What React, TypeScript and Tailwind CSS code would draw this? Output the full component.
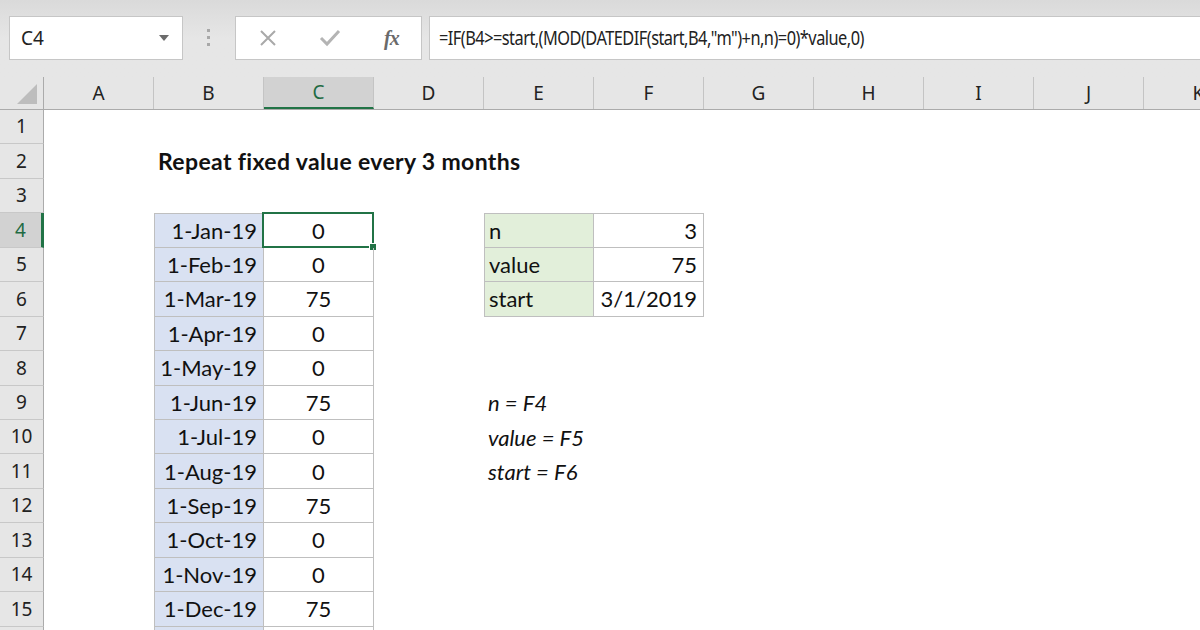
import React from 'react';

const COLS = ['A', 'B', 'C', 'D', 'E', 'F', 'G', 'H', 'I', 'J', 'K'];

type Cell = {
  text: string;
  align: 'left' | 'right' | 'center';
  fill?: string;
  bold?: boolean;
  italic?: boolean;
  boxed?: boolean;
  top?: boolean;
  left?: boolean;
  selected?: boolean;
};

const dates = [
  ['1-Jan-19', '0'],
  ['1-Feb-19', '0'],
  ['1-Mar-19', '75'],
  ['1-Apr-19', '0'],
  ['1-May-19', '0'],
  ['1-Jun-19', '75'],
  ['1-Jul-19', '0'],
  ['1-Aug-19', '0'],
  ['1-Sep-19', '75'],
  ['1-Oct-19', '0'],
  ['1-Nov-19', '0'],
  ['1-Dec-19', '75'],
  ['', ''],
];

const params = [
  ['n', '3'],
  ['value', '75'],
  ['start', '3/1/2019'],
];

const notes: Record<number, string> = { 9: 'n = F4', 10: 'value = F5', 11: 'start = F6' };

function buildRow(r: number): Record<string, Cell> {
  const cells: Record<string, Cell> = {};
  if (r === 2) cells.B = { text: 'Repeat fixed value every 3 months', align: 'left', bold: true };
  const d = dates[r - 4];
  if (d) {
    cells.B = { text: d[0], align: 'right', fill: 'bg-[#d9e1f2]', boxed: true, left: true, top: r === 4 };
    cells.C = { text: d[1], align: 'center', boxed: true, top: r === 4, selected: r === 4 };
  }
  const p = params[r - 4];
  if (p) {
    cells.E = { text: p[0], align: 'left', fill: 'bg-[#e2efda]', boxed: true, left: true, top: r === 4 };
    cells.F = { text: p[1], align: 'right', boxed: true, top: r === 4 };
  }
  if (notes[r]) cells.E = { text: notes[r], align: 'left', italic: true };
  return cells;
}

function GridCell({ cell }: { cell?: Cell }) {
  if (!cell) return <div className="w-[110px] shrink-0 h-full" />;
  const justify =
    cell.align === 'right' ? 'justify-end pr-[6px]' : cell.align === 'center' ? 'justify-center' : 'justify-start pl-[4px]';
  return (
    <div
      className={[
        'relative w-[110px] shrink-0 h-full flex items-center text-[22px] text-[#111] whitespace-nowrap',
        justify,
        cell.fill ?? '',
        cell.boxed ? 'border-r border-b border-[#bfbfbf]' : '',
        cell.boxed && cell.left ? 'border-l' : '',
        cell.boxed && cell.top ? 'border-t' : '',
        cell.bold ? 'font-bold text-[23px] tracking-[0.35px]' : '',
        cell.italic ? 'italic' : '',
      ].join(' ')}
    >
      <span>{cell.text}</span>
      {cell.selected && (
        <div className="absolute -left-[2px] -top-[2px] -right-[1px] -bottom-[1px] border-2 border-[#217346]">
          <div className="absolute -right-[5px] -bottom-[5px] w-[8px] h-[8px] bg-[#217346] border border-white" />
        </div>
      )}
    </div>
  );
}

export default function App() {
  const rows = Array.from({ length: 16 }, (_, i) => i + 1);
  return (
    <div className="w-[1200px] h-[630px] overflow-hidden bg-white font-['Lato','Liberation_Sans',sans-serif]">
      {/* ribbon / formula bar */}
      <div className="h-[77px] bg-gradient-to-b from-[#dadada] via-[#e6e6e6] to-[#e6e6e6] flex items-start pt-[16px]">
        <div className="ml-[9px] w-[174px] h-[44px] bg-white border border-[#c6c6c6] flex items-center pl-[11px] pr-[13px]">
          <span className="text-[19px] text-[#222] font-['Noto_Sans',sans-serif]">C4</span>
          <svg className="ml-auto" width="10" height="6" viewBox="0 0 10 6">
            <path d="M0 0h10L5 6z" fill="#6b6b6b" />
          </svg>
        </div>
        <div className="ml-[24px] mt-[13px] flex flex-col gap-[4px]">
          <div className="w-[3px] h-[3px] bg-[#a8a8a8]" />
          <div className="w-[3px] h-[3px] bg-[#a8a8a8]" />
          <div className="w-[3px] h-[3px] bg-[#a8a8a8]" />
        </div>
        <div className="ml-[25px] w-[187px] h-[44px] bg-white border border-[#c6c6c6] flex items-center">
          <svg className="ml-[23px]" width="18" height="18" viewBox="0 0 18 18">
            <path d="M2 2l14 14M16 2L2 16" stroke="#a9a9a9" strokeWidth="2" />
          </svg>
          <svg className="ml-[42px]" width="22" height="18" viewBox="0 0 22 18">
            <path d="M2 9l6 6L20 2" stroke="#b4b4b4" strokeWidth="3" fill="none" />
          </svg>
          <span className="ml-[43px] text-[20px] italic font-bold text-[#6a6a6a] font-['Liberation_Serif',serif] tracking-[-1px]">
            fx
          </span>
        </div>
        <div className="ml-[7px] flex-1 -mr-[20px] h-[44px] bg-white border border-[#c6c6c6] flex items-center pl-[9px]">
          <span className="text-[19px] text-[#222] font-['Noto_Sans',sans-serif] tracking-[-0.6px] scale-x-[0.86] origin-left whitespace-nowrap">
            =IF(B4&gt;=start,(MOD(DATEDIF(start,B4,"m")+n,n)=0)*value,0)
          </span>
        </div>
      </div>

      {/* column headers */}
      <div className="h-[33px] flex bg-[#e6e6e6] border-b border-[#ababab]">
        <div className="w-[44px] shrink-0 h-full border-r border-[#ababab] relative">
          <svg className="absolute right-[6px] bottom-[5px]" width="20" height="20" viewBox="0 0 20 20">
            <path d="M20 0v20H0z" fill="#bdbdbd" />
          </svg>
        </div>
        {COLS.map((c) => (
          <div
            key={c}
            className={[
              'w-[110px] shrink-0 h-full flex items-center justify-center text-[19px] font-["Noto_Sans",sans-serif] border-r border-[#c4c4c4]',
              c === 'C' ? 'bg-[#d2d2d2] text-[#1f6b43] border-b-2 border-b-[#217346]' : 'text-[#222]',
            ].join(' ')}
          >
            {c}
          </div>
        ))}
      </div>

      {/* rows */}
      {rows.map((r) => {
        const cells = buildRow(r);
        return (
          <div key={r} className="h-[34.45px] flex">
            <div
              className={[
                'w-[44px] shrink-0 h-full flex items-center justify-center text-[19px] font-["Noto_Sans",sans-serif] border-b border-[#c8c8c8]',
                r === 4
                  ? 'bg-[#d2d2d2] text-[#1f6b43] border-r-[3px] border-r-[#217346]'
                  : 'bg-[#e6e6e6] text-[#222] border-r border-r-[#ababab]',
              ].join(' ')}
            >
              {r}
            </div>
            {COLS.map((c) => (
              <GridCell key={c} cell={cells[c]} />
            ))}
          </div>
        );
      })}
    </div>
  );
}
